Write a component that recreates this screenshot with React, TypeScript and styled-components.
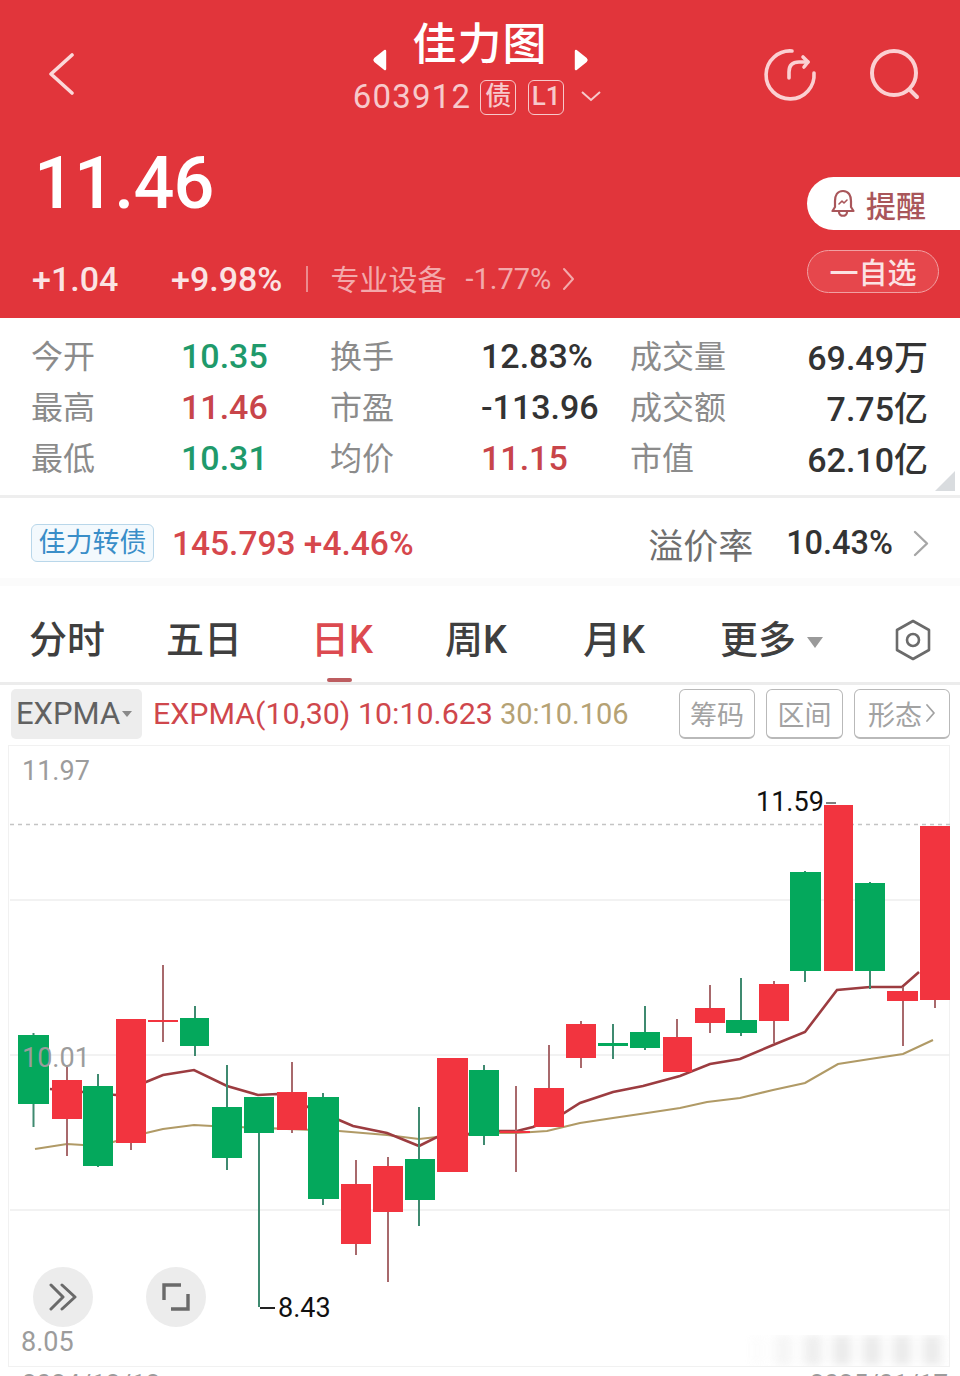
import React from 'react'
import styled, { createGlobalStyle } from 'styled-components'

const CJK = `Roboto, "Noto Sans CJK SC", sans-serif`

const GlobalStyle = createGlobalStyle`
  html, body {
    margin: 0;
    padding: 0;
    background: #fff;
    font-family: ${CJK};
  }
  * { box-sizing: border-box; }
`

const Page = styled.div`
  width: 960px;
  height: 1376px;
  overflow: hidden;
  background: #fff;
`

const Header = styled.header`
  height: 318px;
  background: #e1353b;
  color: #fff;
  display: flex;
  flex-direction: column;
`

const NavRow = styled.div`
  height: 136px;
  display: grid;
  grid-template-columns: 320px 1fr 320px;
  padding-top: 18px;
`

const BackCell = styled.div`
  padding: 35px 0 0 48px;
`

const TitleCell = styled.div`
  display: flex;
  flex-direction: column;
  align-items: center;
`

const TitleRow = styled.div`
  display: flex;
  align-items: center;
  gap: 26px;
  height: 54px;
`

const Title = styled.h1`
  margin: 0;
  font-size: 44px;
  font-weight: 500;
  line-height: 54px;
  letter-spacing: 1px;
`

const SideArrow = styled.svg<{ $flip?: boolean }>`
  margin-top: 30px;
  transform: ${(p) => (p.$flip ? 'scaleX(-1)' : 'none')};
`

const CodeRow = styled.div`
  display: flex;
  align-items: center;
  height: 42px;
  margin: 4px 5px 0 0;
  color: #f7c9cb;
`

const Code = styled.span`
  font-size: 33px;
  letter-spacing: 1.2px;
  line-height: 42px;
  margin-right: 9px;
`

const CodeTag = styled.span`
  width: 36px;
  height: 35px;
  margin-right: 12px;
  border: 1.5px solid #f7c9cb;
  border-radius: 6px;
  font-size: 26px;
  font-weight: 500;
  line-height: 31px;
  text-align: center;
`

const CodeCaret = styled.svg`
  margin: 0 0 2px 4px;
`

const ActionCell = styled.div`
  display: flex;
  justify-content: flex-end;
  gap: 51px;
  padding: 30px 40px 0 0;
`

const PriceRow = styled.div`
  height: 112px;
  display: flex;
  justify-content: space-between;
`

const Price = styled.div`
  font-size: 72px;
  font-weight: 500;
  line-height: 88px;
  padding: 4px 0 0 34px;
  letter-spacing: -0.8px;
  color: #fff;
`

const RemindButton = styled.div`
  align-self: flex-start;
  width: 153px;
  height: 53px;
  margin-top: 41px;
  background: #fff;
  border-radius: 27px 0 0 27px;
  display: flex;
  align-items: center;
  gap: 11px;
  padding-left: 24px;
  color: #a9565a;
  font-size: 30px;
  font-weight: 500;
`

const ChangeRow = styled.div`
  flex: 1;
  display: flex;
  align-items: center;
  padding: 0 21px 0 32px;
  margin-top: -8px;
`

const Change = styled.span<{ $width: number }>`
  width: ${(p) => p.$width}px;
  font-size: 34px;
  font-weight: 500;
  color: #fbe3e3;
`

const Divider = styled.span`
  width: 1.5px;
  height: 26px;
  margin: 0 23px 0 0;
  background: #ec8b8e;
`

const Sector = styled.span`
  font-size: 29px;
  margin-top: -2px;
  color: #f3a9ab;
`

const SectorChange = styled.span`
  font-size: 29px;
  color: #f3a9ab;
  margin: 0 11px 0 19px;
`

const WatchButton = styled.div`
  margin: 0 0 16px auto;
  width: 132px;
  height: 43px;
  background: #e6474c;
  border: 1.5px solid #f1a0a2;
  border-radius: 22px;
  display: flex;
  align-items: center;
  justify-content: center;
  color: #fbe3e3;
  font-size: 29px;
  font-weight: 500;
`

const StatsPanel = styled.section`
  position: relative;
  height: 180px;
  padding: 12px 32px 0 31px;
  border-bottom: 3px solid #eeeeee;
  display: grid;
  grid-template-columns: 150px 149px 151px 149px 1fr auto;
  grid-auto-rows: 51px;
  align-items: center;
`

const StatLabel = styled.span`
  font-size: 32px;
  margin-top: -4px;
  color: #8b8b8b;
`

const StatValue = styled.span<{ $color?: string; $right?: boolean }>`
  font-size: 34px;
  font-weight: 500;
  color: ${(p) => p.$color || '#333'};
  text-align: ${(p) => (p.$right ? 'right' : 'left')};
`

const Fold = styled.div`
  position: absolute;
  right: 5px;
  bottom: 4px;
  width: 0;
  height: 0;
  border-style: solid;
  border-width: 0 0 20px 20px;
  border-color: transparent transparent #d9dcdf transparent;
`

const BondRow = styled.section`
  height: 88px;
  display: flex;
  align-items: center;
  padding: 10px 31px 0 31px;
  border-bottom: 8px solid #fbfbfb;
`

const BondTag = styled.span`
  width: 123px;
  height: 38px;
  border: 1.5px solid #b9d7ea;
  border-radius: 6px;
  background: #f3f9fd;
  color: #3a8ec8;
  font-size: 27px;
  line-height: 36px;
  text-align: center;
  white-space: nowrap;
`

const BondPrice = styled.span`
  margin-left: 18px;
  font-size: 33.5px;
  font-weight: 500;
  color: #d6474c;
`

const BondLabel = styled.span`
  margin-left: auto;
  font-size: 35px;
  color: #6f6f6f;
`

const BondValue = styled.span`
  margin: 0 20px 0 33px;
  font-size: 32.5px;
  font-weight: 500;
  color: #333;
`

const Tabs = styled.nav`
  height: 99px;
  padding: 24px 28px 0 29px;
  display: flex;
  align-items: flex-start;
  border-bottom: 3px solid #ececec;
`

const Tab = styled.div<{ $active?: boolean; $width: number }>`
  position: relative;
  width: ${(p) => p.$width}px;
  height: 60px;
  font-size: 38px;
  line-height: 60px;
  font-weight: 500;
  white-space: nowrap;
  color: ${(p) => (p.$active ? '#dc4a50' : '#3f3f3f')};
`

const TabMark = styled.span`
  position: absolute;
  left: 16px;
  top: 68px;
  width: 25px;
  height: 4px;
  border-radius: 2px;
  background: #bd5d60;
`

const MoreCaret = styled.span`
  display: inline-block;
  margin-left: 11px;
  width: 0;
  height: 0;
  vertical-align: 5px;
  border-left: 8px solid transparent;
  border-right: 8px solid transparent;
  border-top: 11px solid #9a9a9a;
`

const Settings = styled.div`
  margin-left: auto;
  padding-top: 9px;
  display: flex;
`

const Toolbar = styled.div`
  height: 57px;
  display: flex;
  align-items: center;
  padding: 0 10px 0 11px;
`

const IndicatorSelect = styled.div`
  width: 131px;
  height: 50px;
  background: #ededed;
  border-radius: 5px;
  display: flex;
  align-items: center;
  padding-left: 5px;
  font-size: 31px;
  color: #616161;
`

const SelectCaret = styled.span`
  margin-left: 2px;
  width: 0;
  height: 0;
  border-left: 5px solid transparent;
  border-right: 5px solid transparent;
  border-top: 6px solid #8a8a8a;
`

const IndicatorText = styled.span<{ $color: string; $gap: number; $size: number }>`
  margin-left: ${(p) => p.$gap}px;
  font-size: ${(p) => p.$size}px;
  color: ${(p) => p.$color};
  white-space: nowrap;
`

const ToolGroup = styled.div`
  margin-left: auto;
  display: flex;
  gap: 11px;
`

const ToolButton = styled.div<{ $width: number }>`
  width: ${(p) => p.$width}px;
  height: 50px;
  border: 1.5px solid #b9b9b9;
  border-bottom-width: 2px;
  border-radius: 6px;
  display: flex;
  align-items: center;
  justify-content: center;
  gap: 3px;
  font-size: 27px;
  color: #a2a2a2;
  white-space: nowrap;
`

const ChartFrame = styled.div`
  position: relative;
  width: 942px;
  height: 622px;
  margin: 3px 0 0 8px;
  border: 1.5px solid #f1f1f1;
`

const ChartSvg = styled.svg`
  display: block;
  position: absolute;
  left: -9.5px;
  top: -746.5px;
`

const AxisLabel = styled.span<{ $left: number; $top: number }>`
  position: absolute;
  left: ${(p) => p.$left}px;
  top: ${(p) => p.$top}px;
  font-size: 27px;
  line-height: 32px;
  color: #9c9c9c;
`

const PeakLabel = styled.span<{ $left: number; $top: number }>`
  position: absolute;
  left: ${(p) => p.$left}px;
  top: ${(p) => p.$top}px;
  font-size: 27px;
  line-height: 32px;
  color: #111;
  white-space: nowrap;
`

const RoundButton = styled.div<{ $left: number }>`
  position: absolute;
  left: ${(p) => p.$left}px;
  top: 520.5px;
  width: 60px;
  height: 60px;
  border-radius: 50%;
  background: #ececec;
  display: flex;
  align-items: center;
  justify-content: center;
`

const BlurPatch = styled.div`
  position: absolute;
  right: 0;
  bottom: 0;
  width: 205px;
  height: 31px;
  background: repeating-linear-gradient(90deg, #e4e4e4 0 16px, #fbfbfb 16px 30px);
  filter: blur(5px);
  opacity: 0.75;
  mask-image: linear-gradient(90deg, transparent 0, #000 40%);
`

const DateRow = styled.div`
  display: flex;
  justify-content: space-between;
  padding: 0 12px 0 22px;
  margin-top: 2px;
  font-size: 26px;
  line-height: 30px;
  color: #9c9c9c;
`

const RED = '#f2343f'
const GREEN = '#04a85c'

type Candle = { cx: number; x0: number; x1: number; top: number; bottom: number; hi: number; lo: number; up: boolean }

// [center, left, right, body top, body bottom, wick top, wick bottom, red?]
const candles: Candle[] = ([
  [33.5, 18, 49, 1035, 1104, 1033, 1127, 0],
  [67, 52, 82, 1080, 1119, 1065, 1156, 1],
  [98, 83, 113, 1086, 1166, 1074, 1167, 0],
  [131, 116, 146, 1019, 1143, 1019, 1150, 1],
  [163, 148, 178, 1020, 1022, 965, 1042, 1],
  [195, 180, 209, 1018, 1046, 1006, 1056, 0],
  [227, 212, 242, 1107, 1158, 1065, 1170, 0],
  [259, 244, 274, 1097, 1133, 1097, 1307, 0],
  [292, 277, 307, 1092, 1130, 1062, 1133, 1],
  [323, 308, 339, 1097, 1199, 1093, 1205, 0],
  [356, 341, 371, 1184, 1244, 1160, 1255, 1],
  [388, 373, 403, 1166, 1212, 1157, 1282, 1],
  [419, 405, 435, 1159, 1200, 1107, 1226, 0],
  [452, 437, 468, 1058, 1172, 1058, 1172, 1],
  [484, 469, 499, 1070, 1136, 1065, 1145, 0],
  [516, 500, 530, 1131, 1133, 1086, 1172, 1],
  [549, 534, 564, 1088, 1127, 1045, 1127, 1],
  [581, 566, 596, 1024, 1058, 1021, 1068, 1],
  [613, 598, 628, 1043, 1046, 1024, 1059, 0],
  [645, 630, 660, 1032, 1048, 1006, 1050, 0],
  [677, 663, 692, 1037, 1072, 1019, 1072, 1],
  [710, 695, 725, 1008, 1023, 985, 1033, 1],
  [741, 726, 757, 1020, 1033, 978, 1036, 0],
  [774, 759, 789, 984, 1021, 981, 1043, 1],
  [805, 790, 821, 872, 971, 871, 982, 0],
  [839, 824, 853, 805, 971, 805, 971, 1],
  [870, 855, 885, 883, 971, 882, 989, 0],
  [903, 887, 918, 991, 1001, 987, 1046, 1],
  [935, 920, 950, 826, 1000, 826, 1008, 1],
] as number[][]).map(([cx, x0, x1, top, bottom, hi, lo, up]) => ({ cx, x0, x1, top, bottom, hi, lo, up: !!up }))

const ema10 =
  '50,1089 116,1095 146,1082 163,1075 194,1070 227,1086 258,1095 277,1094 339,1120 353,1126 387,1133 419,1146 437,1137 499,1131 517,1131 533,1127 564,1113 580,1103 613,1092 643,1086 680,1076 710,1064 740,1059 773,1045 805,1032 837,990 870,987 902,987 919,972'
const ema30 =
  '35,1149 67,1144 83,1145 113,1142 146,1133 163,1129 194,1125 212,1126 339,1131 387,1135 419,1139 437,1137 499,1133 517,1133 547,1131 580,1123 613,1118 647,1113 680,1108 707,1102 740,1098 773,1090 805,1083 838,1064 870,1059 903,1054 933,1040'

const Chevron = ({ w, h, color, sw = 2.4 }: { w: number; h: number; color: string; sw?: number }) => (
  <svg width={w} height={h} viewBox={`0 0 ${w} ${h}`} fill="none" stroke={color} strokeWidth={sw} strokeLinecap="round" strokeLinejoin="round">
    <path d={`M2 2 L${w - 2} ${h / 2} L2 ${h - 2}`} />
  </svg>
)

const ArrowMark = ({ flip }: { flip?: boolean }) => (
  <SideArrow width="15" height="22" viewBox="0 0 15 22" $flip={flip}>
    <path d="M13 2 L3 10 Q2 11 3 12 L13 20 Z" fill="#fff" stroke="#fff" strokeWidth="2.4" strokeLinejoin="round" />
  </SideArrow>
)

const BackIcon = () => (
  <svg width="26" height="42" viewBox="0 0 26 42" fill="none" stroke="#fbd8d9" strokeWidth="3.6" strokeLinecap="round" strokeLinejoin="round">
    <path d="M24 2 L3 21 L24 40" />
  </svg>
)

const RefreshIcon = () => (
  <svg width="54" height="54" viewBox="0 0 54 54" fill="none" stroke="#fbd0d2" strokeWidth="3.6" strokeLinecap="round" strokeLinejoin="round">
    <path d="M29 3 A24 24 0 1 0 51 25" />
    <path d="M26 30 V24 Q26 14 36 14 H45" />
    <path d="M40 9 L45 14 L41 19" />
  </svg>
)

const SearchIcon = () => (
  <svg width="52" height="52" viewBox="0 0 52 52" fill="none" stroke="#fbd0d2" strokeWidth="4" strokeLinecap="round">
    <circle cx="26" cy="25" r="22" />
    <path d="M42 42 L49 49" />
  </svg>
)

const BellIcon = () => (
  <svg width="24" height="30" viewBox="0 0 24 30" fill="none" stroke="#a9565a" strokeWidth="2.2" strokeLinecap="round" strokeLinejoin="round">
    <path d="M12 2 C6 2 4 7 4 12 V18 L1.5 22 H22.5 L20 18 V12 C20 7 18 2 12 2 Z" />
    <path d="M8 23 C8 28 16 28 16 23" />
    <path d="M8 15 L11 12 L13 14 L16 11" strokeWidth="1.6" />
  </svg>
)

const HexIcon = () => (
  <svg width="38" height="42" viewBox="0 0 38 42" fill="none" stroke="#6b6b6b" strokeWidth="2.6" strokeLinejoin="round">
    <path d="M19 2 L35 11 L35 31 L19 40 L3 31 L3 11 Z" />
    <circle cx="19" cy="21" r="6" />
  </svg>
)

const DoubleChevronIcon = () => (
  <svg width="30" height="28" viewBox="0 0 30 28" fill="none" stroke="#6a6a6a" strokeWidth="3" strokeLinecap="round" strokeLinejoin="round">
    <path d="M3 2 L15 14 L3 26" />
    <path d="M14 2 L27 14 L14 26" />
  </svg>
)

const FrameIcon = () => (
  <svg width="30" height="30" viewBox="0 0 30 30" fill="none" stroke="#6a6a6a" strokeWidth="3.4">
    <path d="M3 18 V3 H20" />
    <path d="M27 12 V27 H10" />
  </svg>
)

const KChart = () => (
  <ChartSvg width="960" height="1376" viewBox="0 0 960 1376">
    <line x1="10" x2="950" y1="900" y2="900" stroke="#eeeeee" strokeWidth="1.5" />
    <line x1="10" x2="950" y1="1055" y2="1055" stroke="#eeeeee" strokeWidth="1.5" />
    <line x1="10" x2="950" y1="1210" y2="1210" stroke="#eeeeee" strokeWidth="1.5" />
    <line x1="10" x2="950" y1="824.5" y2="824.5" stroke="#c4c4c4" strokeWidth="1.5" strokeDasharray="4 4" />
    <polyline points={ema30} fill="none" stroke="#b09a66" strokeWidth="2.2" />
    <polyline points={ema10} fill="none" stroke="#9c3c40" strokeWidth="2.6" />
    {candles.map((c) => (
      <g key={c.cx}>
        <line x1={c.cx} x2={c.cx} y1={c.hi} y2={c.lo} stroke={c.up ? '#a8696c' : '#3f8a70'} strokeWidth="2" />
        <rect x={c.x0} y={c.top} width={c.x1 - c.x0} height={c.bottom - c.top} fill={c.up ? RED : GREEN} />
      </g>
    ))}
    <line x1="260" x2="275" y1="1308" y2="1308" stroke="#222" strokeWidth="2" />
    <line x1="826" x2="836" y1="803" y2="803" stroke="#555" strokeWidth="1.5" />
  </ChartSvg>
)

const stats = [
  ['今开', '10.35', '#1f9a6b', '换手', '12.83%', '#333', '成交量', '69.49万'],
  ['最高', '11.46', '#c8454a', '市盈', '-113.96', '#333', '成交额', '7.75亿'],
  ['最低', '10.31', '#1f9a6b', '均价', '11.15', '#c8454a', '市值', '62.10亿'],
]

const tabs: [string, number][] = [
  ['分时', 137],
  ['五日', 145],
  ['日K', 134],
  ['周K', 138],
  ['月K', 137],
]

export default function App() {
  return (
    <Page>
      <GlobalStyle />
      <Header>
        <NavRow>
          <BackCell>
            <BackIcon />
          </BackCell>
          <TitleCell>
            <TitleRow>
              <ArrowMark />
              <Title>佳力图</Title>
              <ArrowMark flip />
            </TitleRow>
            <CodeRow>
              <Code>603912</Code>
              <CodeTag>债</CodeTag>
              <CodeTag>L1</CodeTag>
              <CodeCaret width="22" height="12" viewBox="0 0 22 12" fill="none" stroke="#f7c9cb" strokeWidth="2">
                <path d="M2 2 L11 10 L20 2" />
              </CodeCaret>
            </CodeRow>
          </TitleCell>
          <ActionCell>
            <RefreshIcon />
            <SearchIcon />
          </ActionCell>
        </NavRow>
        <PriceRow>
          <Price>11.46</Price>
          <RemindButton>
            <BellIcon />
            提醒
          </RemindButton>
        </PriceRow>
        <ChangeRow>
          <Change $width={139}>+1.04</Change>
          <Change $width={135}>+9.98%</Change>
          <Divider />
          <Sector>专业设备</Sector>
          <SectorChange>-1.77%</SectorChange>
          <Chevron w={13} h={24} color="#f3a9ab" sw={2} />
          <WatchButton>一自选</WatchButton>
        </ChangeRow>
      </Header>

      <StatsPanel>
        {stats.map(([a, b, bc, c, d, dc, e, f]) => (
          <React.Fragment key={a}>
            <StatLabel>{a}</StatLabel>
            <StatValue $color={bc}>{b}</StatValue>
            <StatLabel>{c}</StatLabel>
            <StatValue $color={dc}>{d}</StatValue>
            <StatLabel>{e}</StatLabel>
            <StatValue $right>{f}</StatValue>
          </React.Fragment>
        ))}
        <Fold />
      </StatsPanel>

      <BondRow>
        <BondTag>佳力转债</BondTag>
        <BondPrice>145.793 +4.46%</BondPrice>
        <BondLabel>溢价率</BondLabel>
        <BondValue>10.43%</BondValue>
        <Chevron w={16} h={27} color="#a6a6a6" />
      </BondRow>

      <Tabs>
        {tabs.map(([label, width]) => (
          <Tab key={label} $width={width} $active={label === '日K'}>
            {label}
            {label === '日K' && <TabMark />}
          </Tab>
        ))}
        <Tab $width={120}>
          更多
          <MoreCaret />
        </Tab>
        <Settings>
          <HexIcon />
        </Settings>
      </Tabs>

      <Toolbar>
        <IndicatorSelect>
          EXPMA
          <SelectCaret />
        </IndicatorSelect>
        <IndicatorText $color="#cf474c" $gap={11} $size={30.4}>
          EXPMA(10,30) 10:10.623
        </IndicatorText>
        <IndicatorText $color="#b5a274" $gap={7} $size={29}>
          30:10.106
        </IndicatorText>
        <ToolGroup>
          <ToolButton $width={76}>筹码</ToolButton>
          <ToolButton $width={77}>区间</ToolButton>
          <ToolButton $width={96}>
            形态
            <Chevron w={11} h={20} color="#a2a2a2" sw={1.8} />
          </ToolButton>
        </ToolGroup>
      </Toolbar>

      <ChartFrame>
        <KChart />
        <AxisLabel $left={13} $top={8.5}>11.97</AxisLabel>
        <AxisLabel $left={13} $top={295.5}>10.01</AxisLabel>
        <AxisLabel $left={12} $top={579.5}>8.05</AxisLabel>
        <PeakLabel $left={747} $top={39.5}>11.59</PeakLabel>
        <PeakLabel $left={269} $top={546}>8.43</PeakLabel>
        <RoundButton $left={24}>
          <DoubleChevronIcon />
        </RoundButton>
        <RoundButton $left={136.5}>
          <FrameIcon />
        </RoundButton>
        <BlurPatch />
      </ChartFrame>
      <DateRow>
        <span>2024/12/12</span>
        <span>2025/01/17</span>
      </DateRow>
    </Page>
  )
}
